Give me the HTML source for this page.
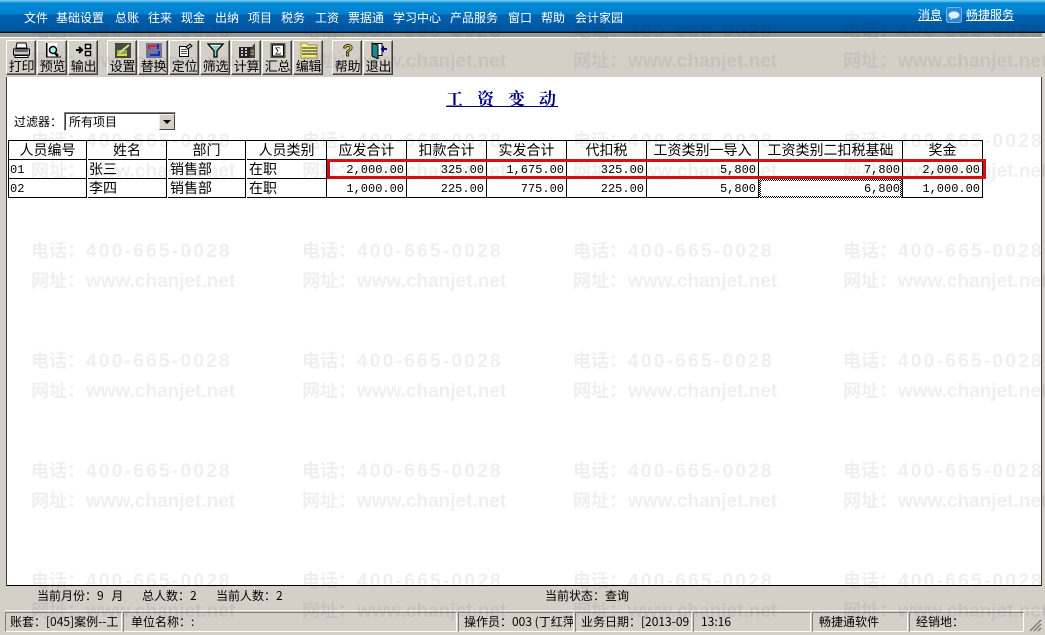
<!DOCTYPE html>
<html lang="zh"><head><meta charset="utf-8"><title>工资变动</title>
<style>
*{box-sizing:border-box;margin:0;padding:0}
html,body{width:1045px;height:635px;overflow:hidden;background:#d4d0c8}
body{position:relative;font:12px "WenQuanYi Zen Hei","Noto Sans CJK SC",sans-serif;color:#000}
.a{position:absolute;white-space:nowrap}
#top{left:0;top:0;width:1045px;height:33px;background:linear-gradient(#7fcdf0 0,#39a9e2 2px,#008ad6 3px,#0080cc 14px,#0062b0 15px,#00559f 31px,#04243f 32px,#000 33px)}
.m{top:11px;color:#fff;font-size:12px;line-height:14px}
.u{text-decoration:underline}
.b{position:absolute;top:40px;width:30px;height:35px;background:#d4d0c8;border:1px solid;border-color:#fff #404040 #404040 #fff;box-shadow:inset -1px -1px 0 #808080}
.b span{position:absolute;left:1px;right:0;top:17px;text-align:center;font-size:13px;line-height:15px;letter-spacing:-.2px}
.b svg{position:absolute;left:5px;top:1px}
#ct{left:6px;top:77px;width:1036px;height:509px;background:#fff;border-left:1px solid #404040;border-right:1px solid #404040;border-bottom:1px solid #000}
.h,.c{position:absolute;border-right:1px solid #000;border-bottom:1px solid #000;font-size:14px;line-height:18px;height:19px;white-space:nowrap}
.h{text-align:center;top:141px}
.n{font:12px/18px "Liberation Mono",monospace;text-align:right;padding-right:2px;padding-top:1px}
.l{padding-left:1px;text-align:left}
.t{padding-left:1px}
.t2{padding-left:2px}
.s{top:589px;font-size:12px;line-height:14px}
.p{position:absolute;top:612px;height:20px;border:1px solid;border-color:#808080 #fff #fff #808080;font-size:12px;line-height:18px;padding-left:6px;white-space:nowrap;overflow:hidden}
.w{position:absolute;color:rgba(40,40,40,.075);white-space:nowrap;font:bold 19px/22px "Liberation Sans",sans-serif}
.w b{font:bold 18px/22px "Noto Sans CJK SC",sans-serif;display:inline-block;width:55px}
.w i{font-style:normal;letter-spacing:2.3px}
.d{position:absolute;background:repeating-conic-gradient(#000 0 25%,#fff 0 50%) 0 0/2px 2px}
</style></head><body>
<div class="a" id="top"></div>
<div class="a m" style="left:24px">文件</div><div class="a m" style="left:56px">基础设置</div><div class="a m" style="left:115px">总账</div><div class="a m" style="left:148px">往来</div><div class="a m" style="left:181px">现金</div><div class="a m" style="left:215px">出纳</div><div class="a m" style="left:248px">项目</div><div class="a m" style="left:281px">税务</div><div class="a m" style="left:315px">工资</div><div class="a m" style="left:348px">票据通</div><div class="a m" style="left:393px">学习中心</div><div class="a m" style="left:450px">产品服务</div><div class="a m" style="left:508px">窗口</div><div class="a m" style="left:541px">帮助</div><div class="a m" style="left:575px">会计家园</div>
<div class="a m u" style="left:918px;top:8px">消息</div>
<svg class="a" style="left:946px;top:7px" width="16" height="16" viewBox="0 0 16 16"><rect x=".5" y=".5" width="15" height="15" rx="2" fill="#2f86d6" stroke="#6db6ee"/><ellipse cx="8" cy="8" rx="5.500" ry="3.600" fill="#dff0fb"/><path d="M5 10.500 4 13l3.500-2z" fill="#dff0fb"/></svg>
<div class="a m u" style="left:966px;top:8px">畅捷服务</div>
<div class="a" style="left:0;top:37px;width:1042px;height:1px;background:#fff"></div>
<div class="a" style="left:0;top:33px;width:1042px;height:4px;background:#9a9a94"></div>

<div class="b" style="left:6px"><svg width="20" height="17" viewBox="0 0 20 17"><path d="M5 1h9l1 5H4z" fill="#fff" stroke="#000"/><path d="M1.500 7h16v6h-16z" fill="#c8c8c8" stroke="#000"/><path d="M3 13.500h13v2H3z" fill="#fff" stroke="#000"/><path d="M3 9h13" stroke="#000"/></svg><span>打印</span></div>
<div class="b" style="left:37px"><svg width="20" height="17" viewBox="0 0 20 17"><path d="M3.500 1v14h14" fill="#fff" stroke="#000"/><path d="M4 1h10v13H4z" fill="#fff"/><circle cx="10" cy="8" r="3.500" fill="#aee" stroke="#000" stroke-width="1.500"/><path d="m12 11 3 3" stroke="#000" stroke-width="2.500"/><path d="M4 1v14h14" fill="none" stroke="#000"/></svg><span>预览</span></div>
<div class="b" style="left:68px"><svg width="20" height="17" viewBox="0 0 20 17"><path d="M2 8h5M5 5l3 3-3 3" stroke="#000" stroke-width="2" fill="none"/><path d="M11.500 2.500h5v4h-5zM11.500 9.500h5v4h-5z" fill="#fff" stroke="#000" stroke-width="1.500"/></svg><span>输出</span></div>

<div class="b" style="left:107px"><svg width="20" height="17" viewBox="0 0 20 17"><rect x="2" y="1" width="16" height="15" fill="#4a4a3c"/><rect x="4" y="8" width="10" height="6" fill="#7fae5a"/><path d="M6 11 16 3" stroke="#d9e27c" stroke-width="2"/><path d="M4 13h10" stroke="#e5d54a" stroke-width="2"/></svg><span>设置</span></div>
<div class="b" style="left:138px"><svg width="20" height="17" viewBox="0 0 20 17"><rect x="2" y="1" width="16" height="15" fill="#74749a"/><path d="M5 7V4h9" stroke="#e02020" stroke-width="2" fill="none"/><path d="M15 9v4H6" stroke="#1030c0" stroke-width="2" fill="none"/><path d="M14 2v5" stroke="#1030c0" stroke-width="2"/></svg><span>替换</span></div>
<div class="b" style="left:169px"><svg width="20" height="17" viewBox="0 0 20 17"><path d="M4.500 4.500h9v10h-9z" fill="#fff" stroke="#000"/><path d="M6 7.500h6M6 9.500h6M6 11.500h6" stroke="#555"/><path d="m11 5 4-3 2 2-4 3z" fill="#bbb" stroke="#000"/></svg><span>定位</span></div>
<div class="b" style="left:200px"><svg width="20" height="17" viewBox="0 0 20 17"><path d="M2 2h15l-6 7v6H8V9z" fill="#8fd0c4" stroke="#000" stroke-width="1.300"/><path d="M5 3.500h9" stroke="#fff"/></svg><span>筛选</span></div>
<div class="b" style="left:231px"><svg width="20" height="17" viewBox="0 0 20 17"><rect x="2" y="5" width="15" height="11" fill="#222"/><path d="M4 7h2M8 7h2M4 10h2M8 10h2M4 13h2M8 13h2" stroke="#fff" stroke-width="1.500"/><path d="m18 1-5 6v9h5z" fill="#444"/><path d="M14 9h3M14 12h3" stroke="#e6d850"/></svg><span>计算</span></div>
<div class="b" style="left:262px"><svg width="20" height="17" viewBox="0 0 20 17"><rect x="2.500" y="1" width="15" height="15" fill="#55574a"/><rect x="4.500" y="3" width="11" height="11" fill="#fff" stroke="#000"/><text x="10" y="12.500" font-family="Liberation Serif" font-size="11" text-anchor="middle">Σ</text></svg><span>汇总</span></div>
<div class="b" style="left:293px"><svg width="20" height="17" viewBox="0 0 20 17"><path d="M2 1h6l1 2h9v13H2z" fill="#f4ee88" stroke="#a89a30"/><path d="M3 6h15M3 9h15M3 12h15" stroke="#222"/></svg><span>编辑</span></div>

<div class="b" style="left:332px"><svg width="20" height="17" viewBox="0 0 20 17"><text x="10" y="14" font-family="Liberation Sans" font-size="17" font-weight="bold" fill="#e2d23a" stroke="#000" stroke-width=".7" text-anchor="middle">?</text></svg><span>帮助</span></div>
<div class="b" style="left:363px"><svg width="20" height="17" viewBox="0 0 20 17"><path d="M3 1.500h10v12H3z" fill="#fff" stroke="#000"/><path d="M3 1 9 3v14l-6-3z" fill="#1a8a8a" stroke="#000"/><path d="M18 6h-3V3.500L11.500 7l3.500 3.500V8h3z" fill="#000090"/></svg><span>退出</span></div>

<div class="a" id="ct"></div>
<div class="a" style="left:446px;top:88px;font:700 17px/19px 'Noto Serif CJK SC',serif;color:#000080;letter-spacing:14px;width:112px;height:19px;overflow:hidden">工资变动</div>
<div class="a" style="left:446px;top:106px;width:112px;height:1px;background:#000080"></div>
<div class="a" style="left:14px;top:115px;line-height:14px">过滤器：</div>
<div class="a" style="left:64px;top:112px;width:112px;height:19px;background:#fff;border:1px solid;border-color:#808080 #fff #fff #808080;box-shadow:inset 1px 1px 0 #404040;padding:2px 0 0 4px;line-height:14px">所有项目</div>
<div class="a" style="left:159px;top:114px;width:16px;height:16px;background:#d4d0c8;border:1px solid;border-color:#eee #404040 #404040 #eee"><i style="position:absolute;left:3px;top:5px;border:4px solid transparent;border-top:4px solid #000;border-bottom:0"></i></div>

<div class="a" style="left:8px;top:140px;width:975px;height:1px;background:#000"></div>
<div class="a" style="left:8px;top:140px;width:1px;height:58px;background:#000"></div>

<div class="h" style="left:9px;width:78px">人员编号</div><div class="h" style="left:88px;width:79px">姓名</div><div class="h" style="left:168px;width:78px">部门</div><div class="h" style="left:247px;width:80px">人员类别</div><div class="h" style="left:327px;width:80px">应发合计</div><div class="h" style="left:407px;width:80px">扣款合计</div><div class="h" style="left:487px;width:80px">实发合计</div><div class="h" style="left:567px;width:80px">代扣税</div><div class="h" style="left:647px;width:112px">工资类别一导入</div><div class="h" style="left:759px;width:144px">工资类别二扣税基础</div><div class="h" style="left:903px;width:80px">奖金</div>

<div class="c n l" style="left:9px;top:160px;width:78px">01</div><div class="c t" style="left:88px;top:160px;width:79px">张三</div><div class="c t2" style="left:168px;top:160px;width:78px">销售部</div><div class="c t2" style="left:247px;top:160px;width:80px">在职</div><div class="c n" style="left:327px;top:160px;width:80px">2,000.00</div><div class="c n" style="left:407px;top:160px;width:80px">325.00</div><div class="c n" style="left:487px;top:160px;width:80px">1,675.00</div><div class="c n" style="left:567px;top:160px;width:80px">325.00</div><div class="c n" style="left:647px;top:160px;width:112px">5,800</div><div class="c n" style="left:759px;top:160px;width:144px">7,800</div><div class="c n" style="left:903px;top:160px;width:80px">2,000.00</div>

<div class="c n l" style="left:9px;top:179px;width:78px">02</div><div class="c t" style="left:88px;top:179px;width:79px">李四</div><div class="c t2" style="left:168px;top:179px;width:78px">销售部</div><div class="c t2" style="left:247px;top:179px;width:80px">在职</div><div class="c n" style="left:327px;top:179px;width:80px">1,000.00</div><div class="c n" style="left:407px;top:179px;width:80px">225.00</div><div class="c n" style="left:487px;top:179px;width:80px">775.00</div><div class="c n" style="left:567px;top:179px;width:80px">225.00</div><div class="c n" style="left:647px;top:179px;width:112px">5,800</div><div class="c n" style="left:759px;top:179px;width:144px">6,800</div><div class="c n" style="left:903px;top:179px;width:80px">1,000.00</div>
<div class="d" style="left:759px;top:179px;width:143px;height:2px"></div><div class="d" style="left:759px;top:196px;width:143px;height:2px"></div><div class="d" style="left:759px;top:179px;width:2px;height:19px"></div><div class="d" style="left:900px;top:179px;width:2px;height:19px"></div>

<div class="a" style="left:327px;top:159px;width:659px;height:20px;border:3px solid #d70f0f"></div>

<div class="a s" style="left:37px;word-spacing:5px">当前月份：9 月</div><div class="a s" style="left:142px">总人数：2</div><div class="a s" style="left:216px">当前人数：2</div><div class="a s" style="left:545px">当前状态：查询</div>
<div class="a" style="left:5px;top:610px;width:1037px;height:1px;background:#efefea"></div>
<div class="p" style="left:5px;width:117px;padding-left:4px">账套：[045]案例--工</div><div class="p" style="left:123px;width:334px;padding-left:7px">单位名称：:</div><div class="p" style="left:458px;width:116px;padding-left:5px">操作员：003 (丁红萍</div><div class="p" style="left:575px;width:117px;padding-left:5px">业务日期：[2013-09</div><div class="p" style="left:693px;width:118px;padding-left:7px">13:16</div><div class="p" style="left:812px;width:96px">畅捷通软件</div><div class="p" style="left:909px;width:115px">经销地：</div>
<svg class="a" style="left:1028px;top:617px" width="14" height="15" viewBox="0 0 14 15"><path d="M2 14 13 3M6 14l7-7M10 14l3-3" stroke="#808080" stroke-width="1.500"/></svg>

<div class="w" style="left:31px;top:19px"><b>电话：</b><i>400-665-0028</i></div><div class="w" style="left:31px;top:49px"><b>网址：</b>www.chanjet.net</div>
<div class="w" style="left:302px;top:19px"><b>电话：</b><i>400-665-0028</i></div><div class="w" style="left:302px;top:49px"><b>网址：</b>www.chanjet.net</div>
<div class="w" style="left:573px;top:19px"><b>电话：</b><i>400-665-0028</i></div><div class="w" style="left:573px;top:49px"><b>网址：</b>www.chanjet.net</div>
<div class="w" style="left:843px;top:19px"><b>电话：</b><i>400-665-0028</i></div><div class="w" style="left:843px;top:49px"><b>网址：</b>www.chanjet.net</div>
<div class="w" style="left:31px;top:129px"><b>电话：</b><i>400-665-0028</i></div><div class="w" style="left:31px;top:159px"><b>网址：</b>www.chanjet.net</div>
<div class="w" style="left:302px;top:129px"><b>电话：</b><i>400-665-0028</i></div><div class="w" style="left:302px;top:159px"><b>网址：</b>www.chanjet.net</div>
<div class="w" style="left:573px;top:129px"><b>电话：</b><i>400-665-0028</i></div><div class="w" style="left:573px;top:159px"><b>网址：</b>www.chanjet.net</div>
<div class="w" style="left:843px;top:129px"><b>电话：</b><i>400-665-0028</i></div><div class="w" style="left:843px;top:159px"><b>网址：</b>www.chanjet.net</div>
<div class="w" style="left:31px;top:239px"><b>电话：</b><i>400-665-0028</i></div><div class="w" style="left:31px;top:269px"><b>网址：</b>www.chanjet.net</div>
<div class="w" style="left:302px;top:239px"><b>电话：</b><i>400-665-0028</i></div><div class="w" style="left:302px;top:269px"><b>网址：</b>www.chanjet.net</div>
<div class="w" style="left:573px;top:239px"><b>电话：</b><i>400-665-0028</i></div><div class="w" style="left:573px;top:269px"><b>网址：</b>www.chanjet.net</div>
<div class="w" style="left:843px;top:239px"><b>电话：</b><i>400-665-0028</i></div><div class="w" style="left:843px;top:269px"><b>网址：</b>www.chanjet.net</div>
<div class="w" style="left:31px;top:349px"><b>电话：</b><i>400-665-0028</i></div><div class="w" style="left:31px;top:379px"><b>网址：</b>www.chanjet.net</div>
<div class="w" style="left:302px;top:349px"><b>电话：</b><i>400-665-0028</i></div><div class="w" style="left:302px;top:379px"><b>网址：</b>www.chanjet.net</div>
<div class="w" style="left:573px;top:349px"><b>电话：</b><i>400-665-0028</i></div><div class="w" style="left:573px;top:379px"><b>网址：</b>www.chanjet.net</div>
<div class="w" style="left:843px;top:349px"><b>电话：</b><i>400-665-0028</i></div><div class="w" style="left:843px;top:379px"><b>网址：</b>www.chanjet.net</div>
<div class="w" style="left:31px;top:459px"><b>电话：</b><i>400-665-0028</i></div><div class="w" style="left:31px;top:489px"><b>网址：</b>www.chanjet.net</div>
<div class="w" style="left:302px;top:459px"><b>电话：</b><i>400-665-0028</i></div><div class="w" style="left:302px;top:489px"><b>网址：</b>www.chanjet.net</div>
<div class="w" style="left:573px;top:459px"><b>电话：</b><i>400-665-0028</i></div><div class="w" style="left:573px;top:489px"><b>网址：</b>www.chanjet.net</div>
<div class="w" style="left:843px;top:459px"><b>电话：</b><i>400-665-0028</i></div><div class="w" style="left:843px;top:489px"><b>网址：</b>www.chanjet.net</div>
<div class="w" style="left:31px;top:569px"><b>电话：</b><i>400-665-0028</i></div><div class="w" style="left:31px;top:599px"><b>网址：</b>www.chanjet.net</div>
<div class="w" style="left:302px;top:569px"><b>电话：</b><i>400-665-0028</i></div><div class="w" style="left:302px;top:599px"><b>网址：</b>www.chanjet.net</div>
<div class="w" style="left:573px;top:569px"><b>电话：</b><i>400-665-0028</i></div><div class="w" style="left:573px;top:599px"><b>网址：</b>www.chanjet.net</div>
<div class="w" style="left:843px;top:569px"><b>电话：</b><i>400-665-0028</i></div><div class="w" style="left:843px;top:599px"><b>网址：</b>www.chanjet.net</div>
</body></html>
